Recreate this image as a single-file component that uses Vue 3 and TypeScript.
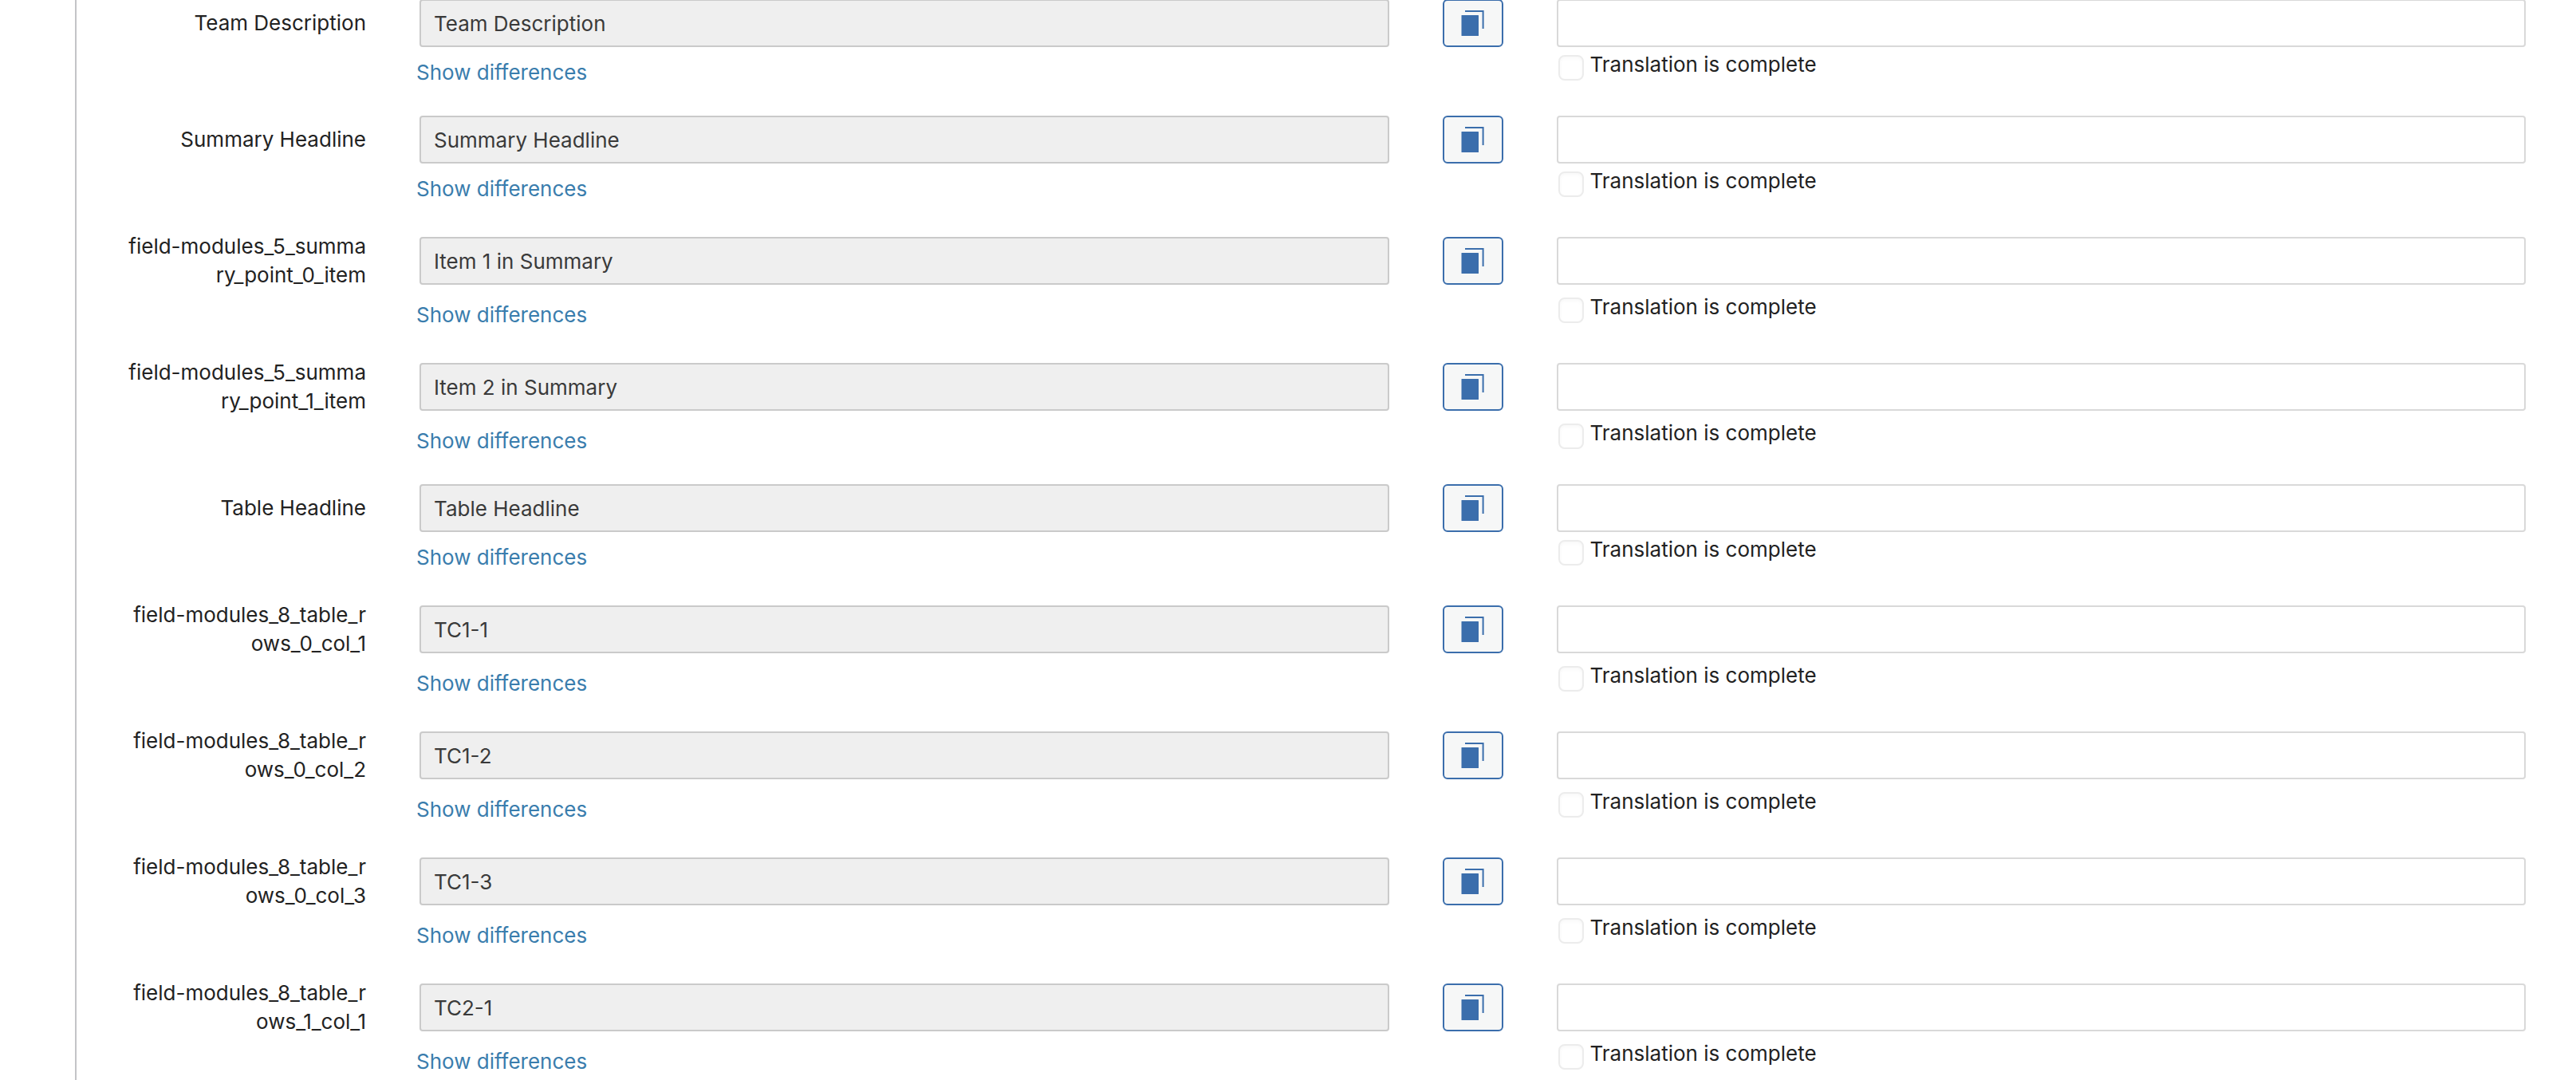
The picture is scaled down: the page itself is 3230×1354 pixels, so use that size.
<script setup lang="ts">
import { reactive } from 'vue'

interface TranslationField {
  id: string
  label: string
  source: string
  target: string
  complete: boolean
}

const field = (id: string, label: string, source: string): TranslationField => ({
  id,
  label,
  source,
  target: '',
  complete: false,
})

const fields = reactive<TranslationField[]>([
  field('team-description', 'Team Description', 'Team Description'),
  field('summary-headline', 'Summary Headline', 'Summary Headline'),
  field('summary-0', 'field-modules_5_summary_point_0_item', 'Item 1 in Summary'),
  field('summary-1', 'field-modules_5_summary_point_1_item', 'Item 2 in Summary'),
  field('table-headline', 'Table Headline', 'Table Headline'),
  field('row-0-col-1', 'field-modules_8_table_rows_0_col_1', 'TC1-1'),
  field('row-0-col-2', 'field-modules_8_table_rows_0_col_2', 'TC1-2'),
  field('row-0-col-3', 'field-modules_8_table_rows_0_col_3', 'TC1-3'),
  field('row-1-col-1', 'field-modules_8_table_rows_1_col_1', 'TC2-1'),
])

function copySource(item: TranslationField): void {
  item.target = item.source
}
</script>

<template>
  <main class="editor">
    <form class="fields" @submit.prevent>
      <section v-for="item in fields" :key="item.id" class="field">
        <label class="name" :for="`source-${item.id}`">{{ item.label }}</label>
        <input :id="`source-${item.id}`" class="text source" type="text" :value="item.source" readonly />
        <button class="copy" type="button" aria-label="Copy original" @click="copySource(item)">
          <svg width="30" height="32" viewBox="0 0 30 32" aria-hidden="true">
            <rect x="0.5" y="6" width="21.5" height="26" rx="0.5" fill="#3b6eac" />
            <path d="M5 1H27.6V23" fill="none" stroke="#3b6eac" stroke-width="2" />
          </svg>
        </button>
        <input v-model="item.target" class="text target" type="text" :aria-label="`Translation of ${item.label}`" />
        <a class="diff" href="#">Show differences</a>
        <label class="complete">
          <input v-model="item.complete" class="check" type="checkbox" />
          <span>Translation is complete</span>
        </label>
      </section>
    </form>
  </main>
</template>

<style>
body {
  margin: 0;
  background: #fff;
}
</style>

<style scoped>
.editor {
  height: 100vh;
  margin-left: 94px;
  overflow: hidden;
  border-left: 2px solid #c3c4c7;
  color: #222;
  font-family: Inter, 'Liberation Sans', sans-serif;
  font-size: 26px;
  line-height: 36px;
}

.fields {
  margin: -1px 63px 0 58px;
}

.field {
  display: grid;
  grid-template-columns: 305px minmax(0, 1fr) 76px minmax(0, 1fr);
  column-gap: 67px;
  align-items: center;
}

.name {
  text-align: right;
  word-break: break-all;
}

.text {
  box-sizing: border-box;
  width: 100%;
  height: 60px;
  margin: 0;
  padding: 0 16px;
  border: 2px solid #d9d9d9;
  border-radius: 4px;
  background: #fff;
  color: #3a3a3a;
  font: inherit;
}

.source {
  border-color: #cacaca;
  background: #efefef;
}

.copy {
  display: flex;
  align-items: center;
  justify-content: center;
  box-sizing: border-box;
  height: 60px;
  padding: 0;
  border: 2px solid #3b6eac;
  border-radius: 6px;
  background: #f6f7f7;
}

.diff,
.complete {
  height: 86px;
  box-sizing: border-box;
}

.diff {
  grid-column: 2;
  justify-self: start;
  margin-left: -4px;
  padding-top: 14px;
  color: #3a7dad;
  text-decoration: none;
}

.complete {
  display: flex;
  grid-column: 4;
  justify-self: start;
  gap: 8px;
  padding: 4px 0 0 2px;
}

.check {
  flex: none;
  box-sizing: border-box;
  width: 32px;
  height: 32px;
  margin: 6px 0 0;
  appearance: none;
  border: 2px solid #ececec;
  border-radius: 8px;
  background: #fff;
  box-shadow: inset 0 2px 4px rgba(0, 0, 0, 0.03);
}

.check:checked {
  background: #3b6eac;
}
</style>
